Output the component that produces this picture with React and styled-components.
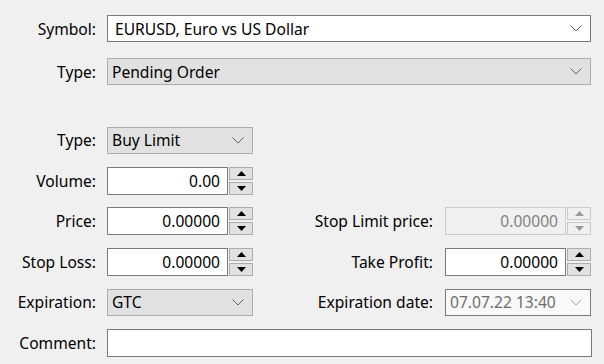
import styled, { createGlobalStyle } from "styled-components";

const GlobalStyle = createGlobalStyle`
  html, body {
    margin: 0;
    padding: 0;
    background: #f0f0f0;
  }
  body {
    font-family: "Noto Sans", "Open Sans", sans-serif;
    font-size: 15.6px;
    color: #000;
  }
`;

function Chevron({ light }) {
  return (
    <svg width="12" height="7" viewBox="0 0 12 7">
      <path
        d="M0.5 0.5 L6 6 L11.5 0.5"
        fill="none"
        stroke={light ? "#a8a8a8" : "#606060"}
        strokeWidth="1"
      />
    </svg>
  );
}

function Combo({ value, variant = "gray", width, light }) {
  return (
    <ComboBox variant={variant} width={width}>
      <ComboText variant={variant}>{value}</ComboText>
      <Chevron light={light} />
    </ComboBox>
  );
}

function Spin({ value, disabled }) {
  return (
    <SpinGroup>
      <NumberBox disabled={disabled}>{value}</NumberBox>
      <SpinButtons>
        <SpinButton disabled={disabled}>
          <svg width="9" height="5" viewBox="0 0 9 5">
            <path d="M4.5 0 L9 5 L0 5 Z" fill={disabled ? "#9a9a9a" : "#000"} />
          </svg>
        </SpinButton>
        <SpinButton disabled={disabled}>
          <svg width="9" height="5" viewBox="0 0 9 5">
            <path d="M0 0 L9 0 L4.5 5 Z" fill={disabled ? "#9a9a9a" : "#000"} />
          </svg>
        </SpinButton>
      </SpinButtons>
    </SpinGroup>
  );
}

export default function App() {
  return (
    <>
      <GlobalStyle />
      <Form>
        <TopRow>
          <Label>Symbol:</Label>
          <Combo value="EURUSD, Euro vs US Dollar" variant="white" width="484px" />
        </TopRow>
        <TopRow>
          <Label>Type:</Label>
          <Combo value="Pending Order" width="484px" />
        </TopRow>

        <Section>
          <Row>
            <Label>Type:</Label>
            <Combo value="Buy Limit" width="146px" />
          </Row>
          <Row>
            <Label>Volume:</Label>
            <Spin value="0.00" />
          </Row>
          <Row>
            <Label>Price:</Label>
            <Spin value="0.00000" />
            <RightLabel>Stop Limit price:</RightLabel>
            <Spin value="0.00000" disabled />
          </Row>
          <Row>
            <Label>Stop Loss:</Label>
            <Spin value="0.00000" />
            <RightLabel>Take Profit:</RightLabel>
            <Spin value="0.00000" />
          </Row>
          <Row>
            <Label>Expiration:</Label>
            <Combo value="GTC" width="146px" />
            <RightLabel>Expiration date:</RightLabel>
            <Combo value="07.07.22 13:40" variant="disabled" width="146px" light />
          </Row>
          <Row>
            <Label>Comment:</Label>
            <TextBox />
          </Row>
        </Section>
      </Form>
    </>
  );
}

const Form = styled.div`
  width: 604px;
  height: 364px;
  padding-top: 7px;
  box-sizing: border-box;
  overflow: hidden;
`;

const TopRow = styled.div`
  display: flex;
  align-items: center;
  height: 43px;
`;

const Section = styled.div`
  margin-top: 27px;
  display: flex;
  flex-direction: column;
`;

const Row = styled.div`
  display: flex;
  align-items: center;
  height: 40.5px;
`;

const Label = styled.div`
  width: 96px;
  padding-right: 11px;
  text-align: right;
  white-space: nowrap;
  flex-shrink: 0;
`;

const RightLabel = styled.div`
  width: 180px;
  padding-right: 12px;
  text-align: right;
  white-space: nowrap;
`;

const ComboBox = styled.div`
  box-sizing: border-box;
  width: ${({ width }) => width};
  height: 27px;
  display: flex;
  align-items: center;
  justify-content: space-between;
  padding: 0 8px 0 ${({ variant }) => (variant === "white" ? "7px" : "4px")};
  background: ${({ variant }) =>
    variant === "white" ? "#fff" : variant === "disabled" ? "#f9f9f9" : "#e1e1e1"};
  border: 1px solid
    ${({ variant }) =>
      variant === "white" ? "#7a7a7a" : variant === "disabled" ? "#7a7a7a" : "#adadad"};
`;

const ComboText = styled.span`
  color: ${({ variant }) => (variant === "disabled" ? "#6d6d6d" : "#000")};
  white-space: nowrap;
`;

const SpinGroup = styled.div`
  display: flex;
  align-items: center;
  gap: 1px;
`;

const NumberBox = styled.div`
  box-sizing: border-box;
  width: 121px;
  height: 28px;
  display: flex;
  align-items: center;
  justify-content: flex-end;
  padding-right: 7px;
  background: ${({ disabled }) => (disabled ? "#f0f0f0" : "#fff")};
  border: 1px solid ${({ disabled }) => (disabled ? "#cccccc" : "#7a7a7a")};
  color: ${({ disabled }) => (disabled ? "#838383" : "#000")};
`;

const SpinButtons = styled.div`
  display: flex;
  flex-direction: column;
  gap: 2px;
`;

const SpinButton = styled.div`
  box-sizing: border-box;
  width: 24px;
  height: 13px;
  display: flex;
  align-items: center;
  justify-content: center;
  background: ${({ disabled }) => (disabled ? "#f0f0f0" : "#e1e1e1")};
  border: 1px solid ${({ disabled }) => (disabled ? "#cccccc" : "#adadad")};
`;

const TextBox = styled.div`
  box-sizing: border-box;
  width: 485px;
  height: 28px;
  background: #fff;
  border: 1px solid #7a7a7a;
`;
